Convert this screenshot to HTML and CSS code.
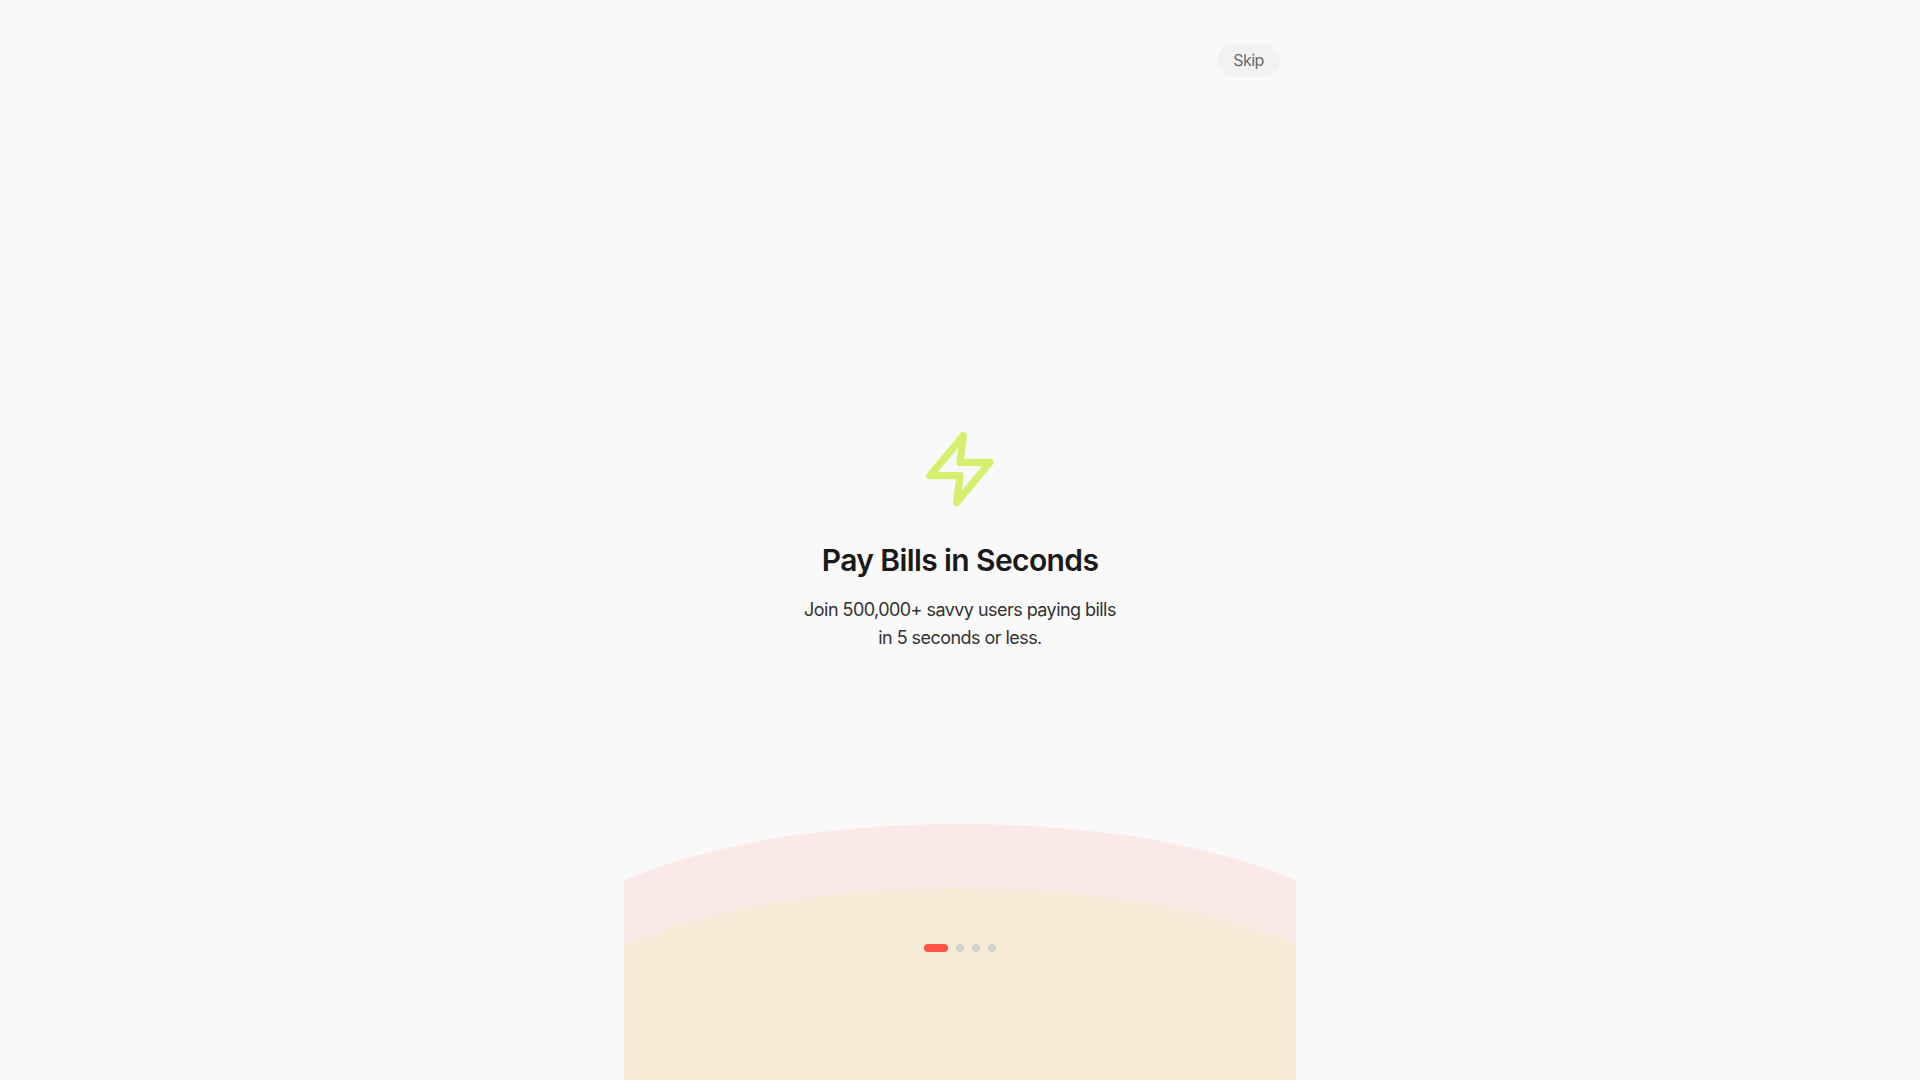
FILE: index.html
```html
<!DOCTYPE html>
<html lang="en">
<head>
    <meta charset="UTF-8">
    <meta name="viewport" content="width=device-width, initial-scale=1.0">
    <title>Pay Bills in Seconds</title>
    <link rel="stylesheet" href="styles.css">
</head>
<body>
    <div class="screen">
        <header class="top-bar">
            <button type="button" class="skip-button">Skip</button>
        </header>
        <main class="slide">
            <svg class="slide-icon" viewBox="0 0 24 24" fill="none" stroke="currentColor" stroke-width="2.2" stroke-linecap="round" stroke-linejoin="round">
                <polygon points="13 2 3 14 12 14 11 22 21 10 12 10 13 2"/>
            </svg>
            <h1 class="slide-title">Pay Bills in Seconds</h1>
            <p class="slide-text">Join 500,000+ savvy users paying bills<br>in 5 seconds or less.</p>
        </main>
        <footer class="bottom">
            <div class="wave wave-back"></div>
            <div class="wave wave-front"></div>
            <div class="dots">
                <span class="dot dot-active"></span>
                <span class="dot"></span>
                <span class="dot"></span>
                <span class="dot"></span>
            </div>
        </footer>
    </div>
</body>
</html>
```

FILE: styles.css
```css
* {
    box-sizing: border-box;
}
body {
    margin: 0;
    background-color: #f9f9f9;
    font-family: "Inter", "Liberation Sans", sans-serif;
    color: #1a1a1a;
}
.screen {
    width: 672px;
    height: 1080px;
    margin: 0 auto;
    display: flex;
    flex-direction: column;
    overflow: hidden;
}
.top-bar {
    display: flex;
    justify-content: flex-end;
    padding: 44px 16px 0;
}
.skip-button {
    width: 63px;
    height: 33px;
    padding: 0 0 2px;
    border: none;
    border-radius: 17px;
    background-color: #f2f2f2;
    color: #6b6b6b;
    font-family: inherit;
    font-size: 16px;
    letter-spacing: -0.6px;
    cursor: pointer;
}
.slide {
    flex: 1;
    display: flex;
    flex-direction: column;
    align-items: center;
    padding-top: 352px;
}
.slide-icon {
    width: 80px;
    height: 80px;
    color: #d4f06e;
}
.slide-title {
    margin: 33px 0 0;
    font-size: 30px;
    line-height: 36px;
    font-weight: 600;
    letter-spacing: -0.6px;
}
.slide-text {
    margin: 18px 0 0;
    font-size: 18px;
    line-height: 28px;
    font-weight: 400;
    letter-spacing: -0.55px;
    text-align: center;
    color: #333333;
}
.bottom {
    position: relative;
    height: 256px;
    overflow: hidden;
}
.wave {
    position: absolute;
    left: -84px;
    width: 840px;
    height: 285px;
    border-radius: 50%;
}
.wave-back {
    top: 0;
    background-color: #fbe9e7;
}
.wave-front {
    top: 64px;
    background-color: #f5ebd7;
}
.dots {
    position: absolute;
    left: 0;
    right: 0;
    top: 120px;
    display: flex;
    justify-content: center;
    gap: 8px;
}
.dot {
    width: 8px;
    height: 8px;
    border-radius: 50%;
    background-color: #d1d1d1;
}
.dot-active {
    width: 24px;
    border-radius: 4px;
    background-color: #ff5349;
}
```
